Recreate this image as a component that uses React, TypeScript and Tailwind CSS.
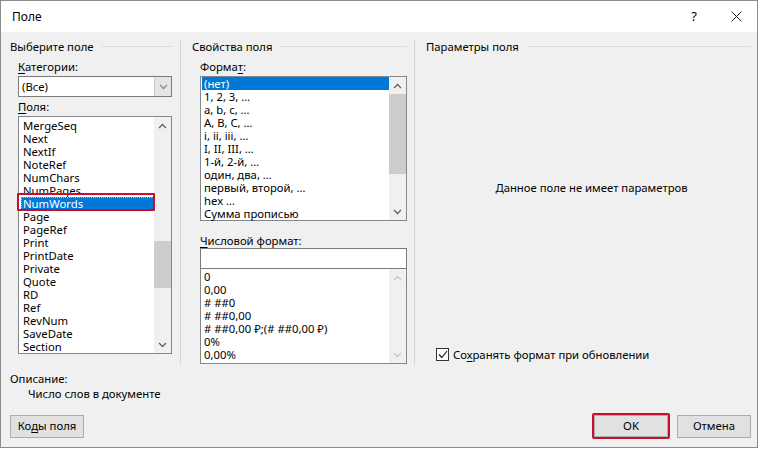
import React from "react";

const Up = ({ c = "#606060" }: { c?: string }) => (
  <svg width="9" height="6" viewBox="0 0 9 6"><polyline points="1,5 4.5,1.5 8,5" fill="none" stroke={c} strokeWidth="1.3" /></svg>
);
const Down = ({ c = "#606060" }: { c?: string }) => (
  <svg width="9" height="6" viewBox="0 0 9 6"><polyline points="1,1 4.5,4.5 8,1" fill="none" stroke={c} strokeWidth="1.3" /></svg>
);

const U = ({ children }: { children: React.ReactNode }) => <span className="underline underline-offset-2">{children}</span>;

function GroupHeader({ title }: { title: string }) {
  return (
    <div className="flex items-center h-[13px] gap-[8px]">
      <span className="whitespace-nowrap leading-[13px]">{title}</span>
      <div className="flex-1 h-px bg-[#dcdcdc]" />
    </div>
  );
}

function ScrollBar({ thumbTop, thumbH, disabled }: { thumbTop?: number; thumbH?: number; disabled?: boolean }) {
  const c = disabled ? "#c8c8c8" : "#606060";
  return (
    <div className="w-[17px] flex flex-col bg-[#f0f0f0] shrink-0">
      <div className="h-[17px] flex items-center justify-center"><Up c={c} /></div>
      <div className="flex-1 flex flex-col">
        {thumbTop !== undefined && (
          <>
            <div style={{ height: thumbTop }} />
            <div className="bg-[#cdcdcd] mx-0" style={{ height: thumbH }} />
          </>
        )}
      </div>
      <div className="h-[17px] flex items-center justify-center"><Down c={c} /></div>
    </div>
  );
}

const fields = ["MergeSeq", "Next", "NextIf", "NoteRef", "NumChars", "NumPages", "NumWords", "Page", "PageRef", "Print", "PrintDate", "Private", "Quote", "RD", "Ref", "RevNum", "SaveDate", "Section"];
const formats = ["(нет)", "1, 2, 3, …", "a, b, c, …", "A, B, C, …", "i, ii, iii, …", "I, II, III, …", "1-й, 2-й, …", "один, два, …", "первый, второй, …", "hex …", "Сумма прописью"];
const nums = ["0", "0,00", "# ##0", "# ##0,00", "# ##0,00 ₽;(# ##0,00 ₽)", "0%", "0,00%"];

export default function App() {
  return (
    <div className="w-[762px] h-[449px] bg-white text-[11.3px] text-black" style={{ fontFamily: '"Noto Sans", "Liberation Sans", sans-serif' }}>
      <div className="w-[758px] h-[448px] border border-[#8c8c8c] flex flex-col">
        {/* Title bar */}
        <div className="h-[31px] bg-white flex items-center pl-[11px] shrink-0">
          <span className="flex-1 text-[12px]">Поле</span>
          <span className="w-[20px] text-center text-[13px] mr-[27px]">?</span>
          <svg width="11" height="11" viewBox="0 0 11 11" className="mr-[15px]"><path d="M0.5 0.5 L10.5 10.5 M10.5 0.5 L0.5 10.5" stroke="#222" strokeWidth="1" /></svg>
        </div>
        {/* Body */}
        <div className="flex-1 bg-[#f0f0f0] flex flex-col pl-[9px] pr-[6px]">
          <div className="flex mt-[8px] h-[325px]">
            {/* Column 1 */}
            <div className="w-[162px] flex flex-col">
              <GroupHeader title="Выберите поле" />
              <div className="pl-[8px] flex flex-col">
                <div className="mt-[7px] leading-[13px]"><U>К</U>атегории:</div>
                <div className="mt-[3px] h-[21px] bg-white border border-[#7a7a7a] flex">
                  <div className="flex-1 pl-[3px] leading-[19px]">(Все)</div>
                  <div className="w-[17px] bg-[#e5e5e5] border-l border-[#c8c8c8] flex items-center justify-center"><Down c="#8a8a8a" /></div>
                </div>
                <div className="mt-[3px] leading-[13px]"><U>П</U>оля:</div>
                <div className="mt-[3px] h-[238px] bg-white border border-[#828790] flex relative">
                  <div className="flex-1 pt-[2px] pl-[2px] flex flex-col">
                    {fields.map((f) => (
                      <div key={f} className={"h-[13px] leading-[13px] pl-[2px] whitespace-nowrap " + (f === "NumWords" ? "bg-[#0078d7] text-white outline-1 outline-dotted outline-[#9cc3ea] -outline-offset-1" : "")}>{f}</div>
                    ))}
                  </div>
                  <ScrollBar thumbTop={107} thumbH={47} />
                  <div className="absolute left-[-2px] top-[76px] w-[138px] h-[18px] border-[2px] border-[#c8102e] rounded-[1px]" />
                </div>
              </div>
            </div>
            {/* Separator */}
            <div className="w-px bg-[#d4d4d4] ml-[8px] mr-[11px]" />
            {/* Column 2 */}
            <div className="w-[215px] flex flex-col">
              <GroupHeader title="Свойства поля" />
              <div className="pl-[8px] flex flex-col">
                <div className="mt-[7px] leading-[13px]">Форма<U>т</U>:</div>
                <div className="mt-[3px] h-[145px] bg-white border border-[#828790] flex">
                  <div className="flex-1 pt-[0px] pl-[1px] flex flex-col">
                    {formats.map((f, i) => (
                      <div key={f} className={"h-[13px] leading-[13px] pl-[2px] whitespace-nowrap " + (i === 0 ? "bg-[#0078d7] text-white" : "")}>{f}</div>
                    ))}
                  </div>
                  <ScrollBar thumbTop={0} thumbH={80} />
                </div>
                <div className="mt-[13px] leading-[13px]"><U>Ч</U>исловой формат:</div>
                <div className="mt-[1px] h-[21px] bg-white border border-[#7a7a7a]" />
                <div className="h-[95px] bg-white border border-[#828790] border-t-0 flex">
                  <div className="flex-1 pt-[1px] pl-[1px] flex flex-col">
                    {nums.map((f) => (
                      <div key={f} className="h-[13px] leading-[13px] pl-[2px] whitespace-nowrap">{f}</div>
                    ))}
                  </div>
                  <ScrollBar disabled />
                </div>
              </div>
            </div>
            {/* Separator */}
            <div className="w-px bg-[#d4d4d4] ml-[7px] mr-[11px]" />
            {/* Column 3 */}
            <div className="flex-1 flex flex-col">
              <GroupHeader title="Параметры поля" />
              <div className="flex-1 flex items-center justify-center pl-[6px] pb-[24px]">Данное поле не имеет параметров</div>
              <div className="flex items-center pl-[10px] mb-[4px] h-[13px]">
                <div className="w-[13px] h-[13px] bg-white border border-[#333] flex items-center justify-center">
                  <svg width="10" height="9" viewBox="0 0 10 9"><polyline points="1,4.5 3.8,7.5 9,1" fill="none" stroke="#222" strokeWidth="1.2" /></svg>
                </div>
                <span className="ml-[4px] leading-[13px]">Со<U>х</U>ранять формат при обновлении</span>
              </div>
            </div>
          </div>
          {/* Description */}
          <div className="mt-[7px] leading-[13px]">Описание:</div>
          <div className="mt-[2px] leading-[13px] pl-[18px]">Число слов в документе</div>
          <div className="flex mt-[15px] items-start">
            <div className="w-[74px] h-[23px] bg-[#e1e1e1] border border-[#adadad] flex items-center justify-center">Ко<U>д</U>ы поля</div>
            <div className="flex-1" />
            <div className="relative w-[74px] h-[22px] bg-[#e1e1e1] border border-[#adadad] flex items-center justify-center">
              OK
              <div className="absolute -left-[3px] -top-[3px] -right-[3px] -bottom-[3px] border-[2px] border-[#c8102e] rounded-[2px]" />
            </div>
            <div className="w-[74px] h-[23px] ml-[9px] bg-[#e1e1e1] border border-[#adadad] flex items-center justify-center">Отмена</div>
          </div>
        </div>
      </div>
    </div>
  );
}
